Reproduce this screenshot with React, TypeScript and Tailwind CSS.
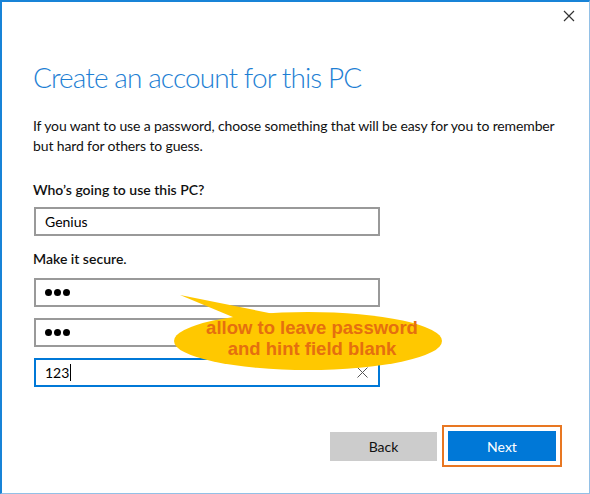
import React from "react";

function Field({ children, active }: { children?: React.ReactNode; active?: boolean }) {
  return (
    <div
      className={
        "flex items-center h-[29px] w-[346px] pl-[9px] pr-[10px] border-2 bg-white text-[14px] text-[#000] " +
        (active ? "border-[#0078d7]" : "border-[#999999]")
      }
    >
      {children}
    </div>
  );
}

function Dots() {
  return (
    <div className="flex gap-[2px]">
      <span className="size-[7px] rounded-full bg-black" />
      <span className="size-[7px] rounded-full bg-black" />
      <span className="size-[7px] rounded-full bg-black" />
    </div>
  );
}

export default function App() {
  return (
    <div
      className="relative w-[590px] h-[494px] bg-white border-t-2 border-l-2 border-r border-b border-t-[#1883d7] border-l-[#1883d7] border-r-[#92c0e6] border-b-[#92c0e6] overflow-hidden"
      style={{ fontFamily: 'Lato, "Open Sans", sans-serif' }}
    >
      <div className="flex justify-end pt-[8px] pr-[14px]">
        <svg width="12" height="12" viewBox="0 0 12 12" className="text-[#333]">
          <path d="M1 1L11 11M11 1L1 11" stroke="currentColor" strokeWidth="1.2" />
        </svg>
      </div>

      <div className="flex flex-col pl-[32px] pr-[27px]">
        <h1 className="mt-[35px] -ml-px text-[28px] leading-[40px] font-light text-[#1e7fd4] tracking-[-0.9px] whitespace-nowrap">
          Create an account for this PC
        </h1>
        <p className="mt-[19px] -ml-px text-[14px] leading-[20px] text-[#111] whitespace-nowrap tracking-[-0.13px]">
          If you want to use a password, choose something that will be easy for you to remember
          <br />
          but hard for others to guess.
        </p>
        <div className="mt-[24px] -ml-px text-[14px] leading-[20px] font-semibold text-[#111]">
          Who’s going to use this PC?
        </div>
        <div className="mt-[7px]">
          <Field>Genius</Field>
        </div>
        <div className="mt-[13px] -ml-px text-[14px] leading-[20px] font-semibold text-[#111]">
          Make it secure.
        </div>
        <div className="mt-[9px] flex flex-col gap-[11px]">
          <Field>
            <Dots />
          </Field>
          <Field>
            <Dots />
          </Field>
          <Field active>
            <span className="flex-1 flex items-center">
              123<span className="ml-[1px] inline-block w-px h-[17px] bg-black" />
            </span>
            <svg width="11" height="11" viewBox="0 0 11 11" className="text-[#555]">
              <path d="M0.5 0.5L10.5 10.5M10.5 0.5L0.5 10.5" stroke="currentColor" strokeWidth="1" />
            </svg>
          </Field>
        </div>

        <div className="mt-[38px] flex justify-end gap-[5px]">
          <button className="mt-[7px] h-[29px] w-[107px] bg-[#cccccc] text-[14px] text-[#111]">
            Back
          </button>
          <div className="border-2 border-[#e87722] p-[4px]">
            <button className="h-[30px] w-[108px] bg-[#0078d7] text-[14px] text-white">
              Next
            </button>
          </div>
        </div>
      </div>

      <svg
        className="absolute left-0 top-0 pointer-events-none"
        width="590"
        height="494"
        viewBox="0 0 590 494"
      >
        <path d="M178 293 L272 312 L238 318 Z" fill="#ffc800" />
        <ellipse cx="306" cy="339" rx="134" ry="29" fill="#ffc800" />
      </svg>
      <div
        className="absolute left-[172px] top-[315px] w-[276px] flex flex-col items-center text-[18.5px] leading-[21px] font-bold text-[#e56f0f]"
        style={{ fontFamily: '"Liberation Sans", Arial, sans-serif' }}
      >
        <span>allow to leave password</span>
        <span>and hint field blank</span>
      </div>
    </div>
  );
}
